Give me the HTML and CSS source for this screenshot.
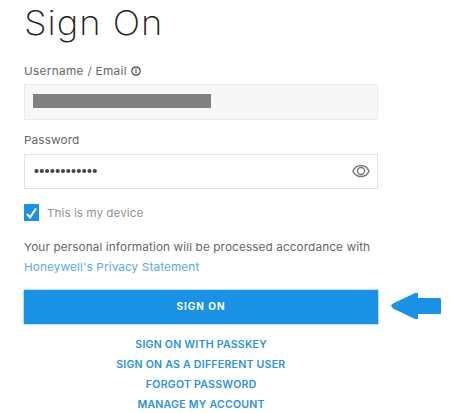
FILE: index.html
```html
<!DOCTYPE html>
<html lang="en">
<head>
<meta charset="utf-8">
<title>Sign On</title>
<link rel="stylesheet" href="styles.css">
</head>
<body>
<main class="sign-on">
  <h1 class="title"><span class="wide">Sign On</span></h1>
  <div class="label label-user"><span class="wide">Username / Email</span>
    <svg class="info" viewBox="0 0 10 10"><circle cx="5" cy="5" r="4.2" fill="none" stroke="#444" stroke-width="1.2"/><path d="M5 4.3v3M5 2.3v1.1" stroke="#444" stroke-width="1.2"/></svg>
  </div>
  <div class="field field-user"><span class="redacted"></span></div>
  <div class="label label-second"><span class="wide">Password</span></div>
  <div class="field field-pass">
    <svg class="dots" viewBox="0 0 64 6"><path d="M2.5 3h58.4" stroke="#444" stroke-width="4.2" stroke-linecap="round" stroke-dasharray="0 5.3"/></svg>
    <svg class="eye" viewBox="0 0 18 14"><path d="M.9 7C2.6 3.2 5.4 1.4 9 1.400S15.400 3.200 17.100 7C15.400 10.800 12.600 12.600 9 12.600S2.600 10.800.9 7Z" fill="none" stroke="#777" stroke-width="1.500"/><circle cx="9" cy="7" r="3.500" fill="none" stroke="#777" stroke-width="1.400"/></svg>
  </div>
  <div class="device">
    <span class="check"><svg viewBox="0 0 15 17"><path d="M3 10l3 3.300L12 4.500" fill="none" stroke="#fff" stroke-width="2"/></svg></span>
    <span class="wide">This is my device</span>
  </div>
  <p class="notice"><span class="wide">Your personal information will be processed accordance with</span><br><a class="privacy wide">Honeywell's Privacy Statement</a></p>
  <div class="action">
    <button class="submit">SIGN ON</button>
    <svg class="arrow" viewBox="0 0 51 26"><path d="M0 12.500 2 10.500 24 0h3v5h22.500L50 6.500v14L49 21H27v5h-3L2 15.500Z" fill="#1992e6"/></svg>
  </div>
  <nav class="links">
    <a>SIGN ON WITH PASSKEY</a>
    <a>SIGN ON AS A DIFFERENT USER</a>
    <a>FORGOT PASSWORD</a>
    <a>MANAGE MY ACCOUNT</a>
  </nav>
</main>
</body>
</html>
```
FILE: styles.css
```css
* { box-sizing: border-box; }
body { margin: 0; background: #fff; overflow: hidden; font-family: Inter, sans-serif; color: #666; }
.sign-on { width: 354px; margin-left: 24px; font-size: 11px; white-space: nowrap; }
.wide { display: inline-block; transform: scaleX(1.07); transform-origin: left center; }
.title { margin: 0; height: 62px; font-size: 34px; font-weight: 200; line-height: 45px; letter-spacing: .9px; color: #222; }
.label { display: flex; align-items: center; height: 16px; letter-spacing: .1px; }
.label-user { gap: 11px; height: 17px; letter-spacing: .3px; }
.label-second { margin-top: 12px; height: 15px; }
.info { width: 10px; height: 10px; }
.field { height: 35px; border: 1px solid #e2e2e2; display: flex; align-items: center; }
.field-user { margin-top: 5px; height: 36px; background: #f7f7f7; border-color: #eaeaea; padding-left: 8px; }
.redacted { width: 178px; height: 14px; margin-bottom: 3px; background: #808080; }
.field-pass { margin-top: 7px; justify-content: space-between; padding: 0 7px 0 9px; }
.dots { width: 64px; height: 6px; margin-bottom: 2px; }
.eye { width: 18px; height: 14px; margin-bottom: 2px; }
.device { display: flex; align-items: center; height: 17px; margin-top: 15px; gap: 8px; color: #929292; letter-spacing: 0; }
.check { width: 15px; height: 17px; background: #1992e6; }
.check svg { display: block; width: 15px; height: 17px; }
.notice { margin: 16px 0 0; line-height: 20px; height: 40px; letter-spacing: .1px; }
.privacy { color: #57a9e9; }
.action { display: flex; align-items: center; gap: 13px; width: 418px; height: 34px; margin-top: 13px; }
.submit { width: 354px; height: 34px; padding: 0 0 2px; border: 0; background: #1992e6; box-shadow: 0 0 0 .5px #72bdf0; color: #fff; font: 700 10px Inter, sans-serif; letter-spacing: 1px; }
.arrow { width: 51px; height: 26px; margin-top: -2px; }
.links { display: flex; flex-direction: column; align-items: center; margin-top: 10px; line-height: 20px; font-size: 10px; font-weight: 600; letter-spacing: .2px; color: #2a91df; }
.links a { transform: scaleX(1.06); }
```
